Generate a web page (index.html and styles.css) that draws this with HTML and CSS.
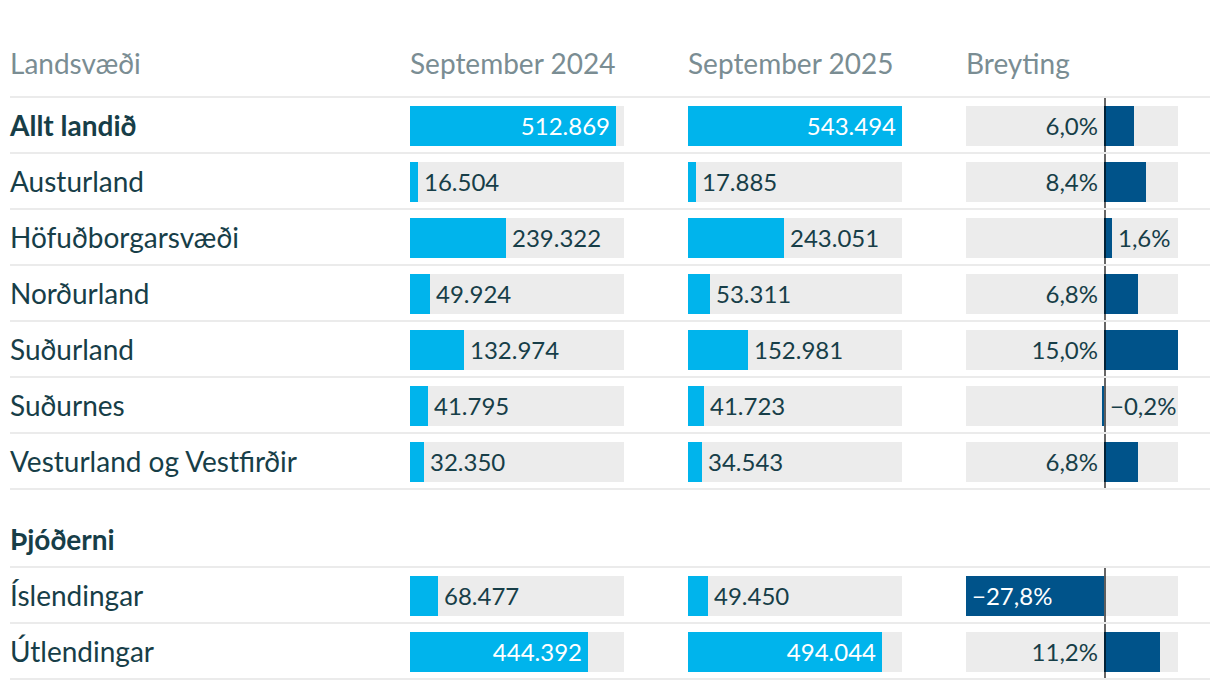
FILE: index.html
```html
<!DOCTYPE html>
<html lang="is">
<head>
<meta charset="utf-8">
<title>Landsvæði</title>
<link rel="stylesheet" href="styles.css">
</head>
<body>
<div class="table">
  <div class="row head">
    <div class="label">Landsvæði</div>
    <div class="cell">September 2024</div>
    <div class="cell">September 2025</div>
    <div class="cell">Breyting</div>
  </div>

  <div class="row">
    <div class="label bold">Allt landið</div>
    <div class="cell"><div class="track"><div class="fill" style="width:206px"><span class="val-in">512.869</span></div></div></div>
    <div class="cell"><div class="track"><div class="fill" style="width:214px"><span class="val-in">543.494</span></div></div></div>
    <div class="cell"><div class="chg"><div class="neg"><span class="lbl-left">6,0%</span></div><div class="pos"><div class="pbar" style="width:30px"></div></div></div></div>
  </div>

  <div class="row">
    <div class="label">Austurland</div>
    <div class="cell"><div class="track"><div class="fill" style="width:8px"></div><span class="val-out">16.504</span></div></div>
    <div class="cell"><div class="track"><div class="fill" style="width:8px"></div><span class="val-out">17.885</span></div></div>
    <div class="cell"><div class="chg"><div class="neg"><span class="lbl-left">8,4%</span></div><div class="pos"><div class="pbar" style="width:42px"></div></div></div></div>
  </div>

  <div class="row">
    <div class="label">Höfuðborgarsvæði</div>
    <div class="cell"><div class="track"><div class="fill" style="width:96px"></div><span class="val-out">239.322</span></div></div>
    <div class="cell"><div class="track"><div class="fill" style="width:96px"></div><span class="val-out">243.051</span></div></div>
    <div class="cell"><div class="chg"><div class="neg"></div><div class="pos"><div class="pbar" style="width:8px"></div><span class="lbl-right">1,6%</span></div></div></div>
  </div>

  <div class="row">
    <div class="label">Norðurland</div>
    <div class="cell"><div class="track"><div class="fill" style="width:20px"></div><span class="val-out">49.924</span></div></div>
    <div class="cell"><div class="track"><div class="fill" style="width:22px"></div><span class="val-out">53.311</span></div></div>
    <div class="cell"><div class="chg"><div class="neg"><span class="lbl-left">6,8%</span></div><div class="pos"><div class="pbar" style="width:34px"></div></div></div></div>
  </div>

  <div class="row">
    <div class="label">Suðurland</div>
    <div class="cell"><div class="track"><div class="fill" style="width:54px"></div><span class="val-out">132.974</span></div></div>
    <div class="cell"><div class="track"><div class="fill" style="width:60px"></div><span class="val-out">152.981</span></div></div>
    <div class="cell"><div class="chg"><div class="neg"><span class="lbl-left">15,0%</span></div><div class="pos"><div class="pbar" style="width:74px"></div></div></div></div>
  </div>

  <div class="row">
    <div class="label">Suðurnes</div>
    <div class="cell"><div class="track"><div class="fill" style="width:18px"></div><span class="val-out">41.795</span></div></div>
    <div class="cell"><div class="track"><div class="fill" style="width:16px"></div><span class="val-out">41.723</span></div></div>
    <div class="cell"><div class="chg"><div class="neg"><div class="nbar" style="width:2px"></div></div><div class="pos"><span class="lbl-right">−0,2%</span></div></div></div>
  </div>

  <div class="row">
    <div class="label">Vesturland og Vestfirðir</div>
    <div class="cell"><div class="track"><div class="fill" style="width:14px"></div><span class="val-out">32.350</span></div></div>
    <div class="cell"><div class="track"><div class="fill" style="width:14px"></div><span class="val-out">34.543</span></div></div>
    <div class="cell"><div class="chg"><div class="neg"><span class="lbl-left">6,8%</span></div><div class="pos"><div class="pbar" style="width:34px"></div></div></div></div>
  </div>

  <div class="row section">
    <div class="label bold">Þjóðerni</div>
  </div>

  <div class="row">
    <div class="label">Íslendingar</div>
    <div class="cell"><div class="track"><div class="fill" style="width:28px"></div><span class="val-out">68.477</span></div></div>
    <div class="cell"><div class="track"><div class="fill" style="width:20px"></div><span class="val-out">49.450</span></div></div>
    <div class="cell"><div class="chg"><div class="neg"><div class="nbar inside" style="width:138px">−27,8%</div></div><div class="pos"></div></div></div>
  </div>

  <div class="row">
    <div class="label">Útlendingar</div>
    <div class="cell"><div class="track"><div class="fill" style="width:178px"><span class="val-in">444.392</span></div></div></div>
    <div class="cell"><div class="track"><div class="fill" style="width:194px"><span class="val-in">494.044</span></div></div></div>
    <div class="cell"><div class="chg"><div class="neg"><span class="lbl-left">11,2%</span></div><div class="pos"><div class="pbar" style="width:56px"></div></div></div></div>
  </div>
</div>
</body>
</html>
```

FILE: styles.css
```css
html, body {
  margin: 0;
  padding: 0;
  background: #ffffff;
}

body {
  font-family: Lato, "Open Sans", "DejaVu Sans", sans-serif;
  color: #173e48;
}

.table {
  padding: 0 10px;
}

.row {
  display: grid;
  grid-template-columns: 400px 278px 278px 244px;
  padding: 8px 0 6px;
  border-bottom: 2px solid #ebebeb;
  font-size: 24px;
  line-height: 40px;
  white-space: nowrap;
}

.row.head {
  padding: 43px 0 13px;
  color: #7a8d93;
  font-size: 28px;
}

.row.section {
  padding: 30px 0 6px;
}

.label {
  height: 40px;
  font-size: 28px;
  line-height: 38px;
}

.head .label {
  line-height: 40px;
}

.bold {
  font-weight: 700;
}

.track {
  width: 214px;
  height: 40px;
  background: #ececec;
  display: flex;
}

.fill {
  flex: none;
  height: 40px;
  background: #00b4ec;
  display: flex;
  justify-content: flex-end;
}

.val-in {
  color: #ffffff;
  padding-right: 6px;
}

.val-out {
  padding-left: 6px;
}

.chg {
  position: relative;
  width: 212px;
  height: 40px;
  background: #ececec;
  display: flex;
}

.chg::after {
  content: "";
  position: absolute;
  left: 138px;
  top: -8px;
  bottom: -6px;
  width: 2px;
  background: rgba(0, 0, 0, 0.6);
}

.neg {
  flex: none;
  width: 138px;
  display: flex;
  justify-content: flex-end;
}

.pos {
  flex: 1;
  display: flex;
}

.pbar,
.nbar {
  flex: none;
  height: 40px;
  background: #00538a;
}

.nbar.inside {
  box-sizing: border-box;
  padding-left: 6px;
  color: #ffffff;
}

.lbl-left {
  padding-right: 6px;
}

.lbl-right {
  padding-left: 6px;
}
```
